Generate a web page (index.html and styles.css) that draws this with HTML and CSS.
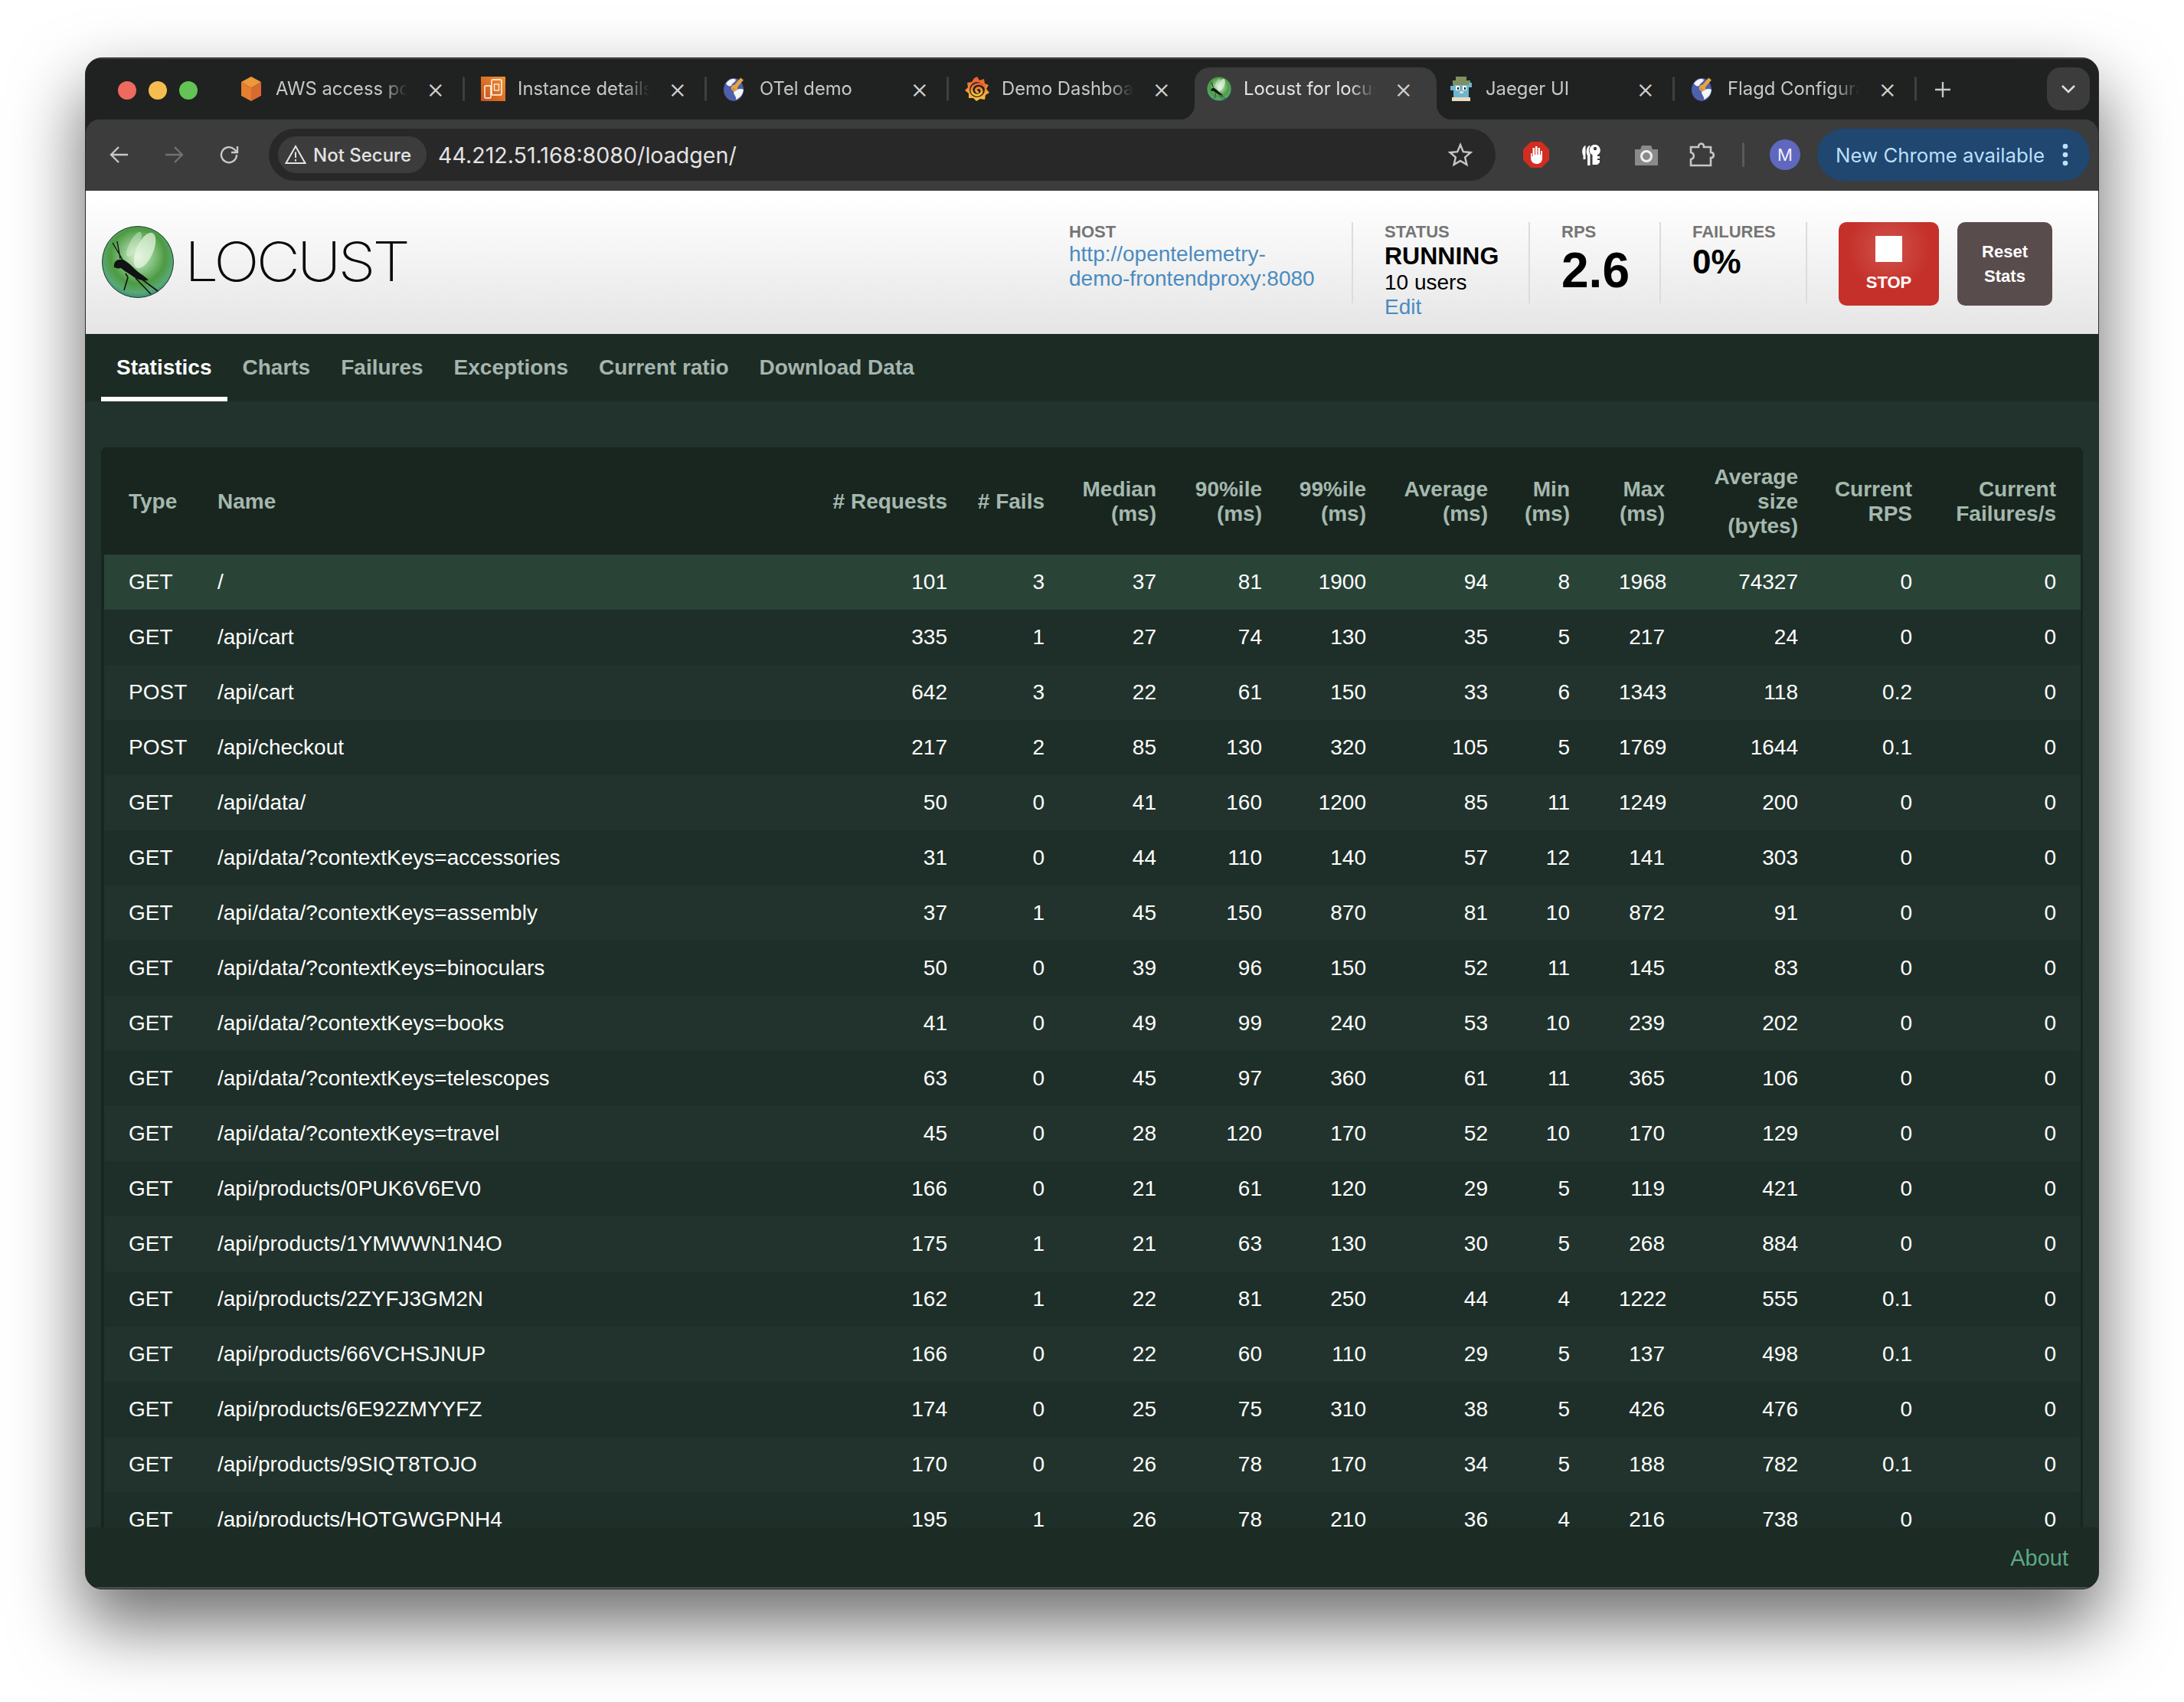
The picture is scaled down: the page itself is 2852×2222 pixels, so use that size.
FILE: index.html
```html
<!DOCTYPE html>
<html lang="en">
<head>
<meta charset="utf-8">
<title>Locust for locust</title>
<link rel="stylesheet" href="styles.css">
</head>
<body>
<svg class="defs" width="0" height="0" aria-hidden="true">
  <defs>
    <radialGradient id="orb" cx="50%" cy="42%" r="62%">
      <stop offset="0" stop-color="#d9f0d2"/><stop offset=".35" stop-color="#86c383"/><stop offset=".62" stop-color="#4d9a42"/><stop offset=".82" stop-color="#5aa874"/><stop offset="1" stop-color="#2f7f86"/>
    </radialGradient>
    <linearGradient id="graf" x1="0" y1="0" x2="0" y2="1">
      <stop offset="0" stop-color="#e8582e"/><stop offset="1" stop-color="#fbc63a"/>
    </linearGradient>
    <linearGradient id="ec2" x1="0" y1="1" x2="1" y2="0">
      <stop offset="0" stop-color="#c8511b"/><stop offset="1" stop-color="#f09030"/>
    </linearGradient>
    <symbol id="locust" viewBox="0 0 94 94">
      <circle cx="47" cy="47" r="46.5" fill="url(#orb)" stroke="#1d3b2a" stroke-width="1"/>
      <ellipse cx="56" cy="32" rx="11" ry="25" transform="rotate(24 56 32)" fill="#e9f6e4" opacity=".7"/>
      <ellipse cx="42" cy="24" rx="6" ry="18" transform="rotate(28 42 24)" fill="#e9f6e4" opacity=".4"/>
      <path d="M14 22 L27 44 M20 20 L24 43" stroke="#111" stroke-width="1.4" fill="none"/>
      <path d="M16 54 C15 46 20 43 28 44 C36 48 42 56 50 62 C54 65 58 67 61 71 C52 72 46 70 38 64 C32 60 28 58 25 55 C21 56 19 55 16 54Z" fill="#0f1412"/>
      <path d="M31 62 L34 67 L29 84 M44 68 L64 89 M50 68 L73 85" stroke="#111" stroke-width="1.6" fill="none"/>
    </symbol>
    <symbol id="otel" viewBox="0 0 32 32">
      <ellipse cx="14" cy="17" rx="13" ry="15" fill="#4e60ac"/>
      <path d="M4 9 C8 3 14 2 17 4 C16 8 12 8 11 12 C8 13 6 12 4 9Z M14 20 C18 16 24 15 27 17 C26 24 22 28 17 30 C18 26 14 24 14 20Z" fill="#f4f5f7"/>
      <path d="M14 16 L25 3" stroke="#e8a33a" stroke-width="5" fill="none"/>
      <circle cx="15" cy="15" r="3.2" fill="none" stroke="#e8a33a" stroke-width="2"/>
    </symbol>
  </defs>
</svg>

<div class="window">
  <div class="titlebar">
    <div class="traffic"><span class="light red"></span><span class="light amber"></span><span class="light green"></span></div>
    <div class="tabs">
      <div class="tab">
        <svg class="fav" viewBox="0 0 32 32"><polygon points="16,0 29,7 16,15 3,7" fill="#ef973b"/><polygon points="3,7 16,15 16,32 3,25" fill="#e57f31"/><polygon points="29,7 16,15 16,32 29,25" fill="#d96a2f"/></svg>
        <span class="tab-title">AWS access portal</span><span class="tab-x">×</span>
      </div>
      <div class="tab">
        <svg class="fav" viewBox="0 0 32 32"><rect width="32" height="32" fill="url(#ec2)"/><rect x="14" y="4" width="13" height="20" rx="1.5" fill="none" stroke="#fff" stroke-width="1.4"/><rect x="5" y="12" width="8" height="16" rx="1.5" fill="none" stroke="#fff" stroke-width="1.4"/><rect x="17.500" y="10" width="6" height="8" fill="none" stroke="#fff" stroke-width="1.2"/></svg>
        <span class="tab-title">Instance details</span><span class="tab-x">×</span>
      </div>
      <div class="tab">
        <svg class="fav"><use href="#otel"/></svg>
        <span class="tab-title">OTel demo</span><span class="tab-x">×</span>
      </div>
      <div class="tab tab-before-active">
        <svg class="fav" viewBox="0 0 32 32"><path d="M16 0 L19 5 L25 3 L26 9 L31 11 L28 16 L32 21 L27 24 L26 30 L20 29 L15 32 L11 28 L5 28 L5 22 L0 18 L4 14 L3 8 L9 7 L12 2Z" fill="url(#graf)"/><circle cx="16" cy="17" r="10" fill="#202221"/><path d="M26 13 C22 8 11 8 9 16 C8 23 16 27 21 22 C24 18 20 13 16 15 C13 17 15 21 18 20" fill="none" stroke="url(#graf)" stroke-width="3"/></svg>
        <span class="tab-title">Demo Dashboard</span><span class="tab-x">×</span>
      </div>
      <div class="tab tab-active">
        <svg class="fav"><use href="#locust"/></svg>
        <span class="tab-title">Locust for locust</span><span class="tab-x">×</span>
      </div>
      <div class="tab">
        <svg class="fav" viewBox="0 0 32 32" shape-rendering="crispEdges"><rect x="9" y="0" width="14" height="5" fill="#7f8f60"/><rect x="5" y="5" width="23" height="6" fill="#7f8f60"/><rect x="6" y="11" width="20" height="16" fill="#6bb6d0"/><rect x="2" y="12" width="4" height="6" fill="#6bb6d0"/><rect x="26" y="8" width="4" height="6" fill="#6bb6d0"/><rect x="9" y="12" width="5" height="6" fill="#fff"/><rect x="18" y="12" width="5" height="6" fill="#fff"/><rect x="11" y="14" width="2" height="3" fill="#222"/><rect x="20" y="14" width="2" height="3" fill="#222"/><rect x="14" y="19" width="5" height="3" fill="#e8d8b8"/><rect x="4" y="27" width="24" height="5" fill="#e8dcc0"/></svg>
        <span class="tab-title">Jaeger UI</span><span class="tab-x">×</span>
      </div>
      <div class="tab tab-last">
        <svg class="fav"><use href="#otel"/></svg>
        <span class="tab-title">Flagd Configurator</span><span class="tab-x">×</span>
      </div>
    </div>
    <svg class="plus" viewBox="0 0 22 22"><path d="M11 1V21M1 11H21" stroke="#c7c7c7" stroke-width="2.400"/></svg>
    <div class="tab-menu"><svg width="20" height="12" viewBox="0 0 20 12"><path d="M2 2L10 10L18 2" fill="none" stroke="#dcdcdc" stroke-width="2.600"/></svg></div>
  </div>

  <div class="toolbar">
    <svg class="nav-ico" viewBox="0 0 28 28"><path d="M25 14H4M13 4L3 14L13 24" fill="none" stroke="#c7c7c7" stroke-width="2.400"/></svg>
    <svg class="nav-ico nav-fwd" viewBox="0 0 28 28"><path d="M3 14H24M15 4L25 14L15 24" fill="none" stroke="#717171" stroke-width="2.400"/></svg>
    <svg class="nav-ico nav-reload" viewBox="0 0 28 28"><path d="M23 14A10 10 0 1 1 20 7L24 11M24 3V11H16" fill="none" stroke="#c7c7c7" stroke-width="2.400"/></svg>
    <div class="omnibox">
      <div class="secure">
        <svg width="28" height="26" viewBox="0 0 28 26"><path d="M14 2L26.500 24H1.500Z M14 9.500V17 M14 19V21.500" fill="none" stroke="#e3e3e3" stroke-width="2"/></svg>
        <span>Not Secure</span>
      </div>
      <span class="url">44.212.51.168:8080/loadgen/</span>
      <svg class="star" viewBox="0 0 32 32"><path d="M16 3L19.800 12.200L29.500 13L22.100 19.400L24.400 29L16 23.900L7.600 29L9.900 19.400L2.500 13L12.200 12.200Z" fill="none" stroke="#c7c7c7" stroke-width="2.400"/></svg>
    </div>
    <div class="exts">
      <svg class="ext" viewBox="0 0 34 34"><polygon points="10,0 24,0 34,10 34,24 24,34 10,34 0,24 0,10" fill="#d12d20"/><path d="M10 15V21C10 26 13 29 18 29C23 29 25 25 25 22V12H23V17H22V8H19.500V17H18.500V6H16V17H15V8H12.500V19H11.500V15Z" fill="#fff"/></svg>
      <svg class="ext" viewBox="0 0 34 34"><path d="M9 5C5 7 4 14 6.500 18V23H9.500V5Z" fill="#fff"/><path d="M14.500 5C10.500 7 9.500 14 12 18V31H15.500V5Z" fill="#fff"/><circle cx="21.700" cy="11" r="8" fill="#3c3c3c"/><circle cx="21.700" cy="11" r="7.200" fill="#fff"/><path d="M18.500 15H25V19H28V22H25V24H28V27L25 30H18.500Z" fill="#fff"/><circle cx="22" cy="9" r="2.200" fill="#3c3c3c"/></svg>
      <svg class="ext" viewBox="0 0 34 34"><path d="M2 10H9L11 5H23L25 10H32V31H2Z" fill="#8a8a8a"/><circle cx="17" cy="19" r="6.500" fill="none" stroke="#f0f0f0" stroke-width="3"/></svg>
      <svg class="ext" viewBox="0 0 34 34"><path d="M3 7H13C13 1 20 1 20 7H29V14C34 14 34 21 29 21V31H3V23C8 22 8 15 3 14Z" fill="none" stroke="#c7c7c7" stroke-width="2.600"/></svg>
    </div>
    <span class="tool-sep"></span>
    <span class="avatar">M</span>
    <div class="update">
      <span>New Chrome available</span>
      <svg width="10" height="30" viewBox="0 0 10 30"><circle cx="5" cy="4" r="3.300" fill="#c0e0fb"/><circle cx="5" cy="15" r="3.300" fill="#c0e0fb"/><circle cx="5" cy="26" r="3.300" fill="#c0e0fb"/></svg>
    </div>
  </div>

  <header class="app-header">
    <svg class="logo-orb"><use href="#locust"/></svg>
    <span class="wordmark">LOCUST</span>
    <div class="stats">
      <div class="stat stat-host"><div class="stat-label">HOST</div><a class="stat-link">http://opentelemetry-<br>demo-frontendproxy:8080</a></div>
      <div class="stat stat-status"><div class="stat-label">STATUS</div><div class="running">RUNNING</div><div class="users">10 users</div><a class="stat-link stat-edit">Edit</a></div>
      <div class="stat stat-rps"><div class="stat-label">RPS</div><div class="rps">2.6</div></div>
      <div class="stat stat-fail"><div class="stat-label">FAILURES</div><div class="fail">0%</div></div>
      <div class="btn btn-stop"><span class="stop-ico"></span><span>STOP</span></div>
      <div class="btn btn-reset"><span>Reset</span><span>Stats</span></div>
    </div>
  </header>

  <nav class="app-nav">
    <span class="nav-tab nav-tab-on">Statistics</span>
    <span class="nav-tab">Charts</span>
    <span class="nav-tab">Failures</span>
    <span class="nav-tab">Exceptions</span>
    <span class="nav-tab">Current ratio</span>
    <span class="nav-tab">Download Data</span>
  </nav>

  <main class="app-main">
    <div class="panel">
      <table class="stats-table">
        <colgroup>
          <col class="c-type"><col class="c-name"><col class="c-req"><col class="c-fails"><col class="c-med"><col class="c-p90"><col class="c-p99"><col class="c-avg"><col class="c-min"><col class="c-max"><col class="c-size"><col class="c-rps"><col class="c-frate">
        </colgroup>
        <thead>
          <tr><th class="l">Type</th><th class="l">Name</th><th># Requests</th><th># Fails</th><th>Median<br>(ms)</th><th>90%ile<br>(ms)</th><th>99%ile<br>(ms)</th><th>Average<br>(ms)</th><th>Min<br>(ms)</th><th>Max<br>(ms)</th><th>Average<br>size<br>(bytes)</th><th>Current<br>RPS</th><th>Current<br>Failures/s</th></tr>
        </thead>
        <tbody>
          <tr class="hover"><td class="l">GET</td><td class="l">/</td><td>101</td><td>3</td><td>37</td><td>81</td><td>1900</td><td>94</td><td>8</td><td>1968</td><td>74327</td><td>0</td><td>0</td></tr>
          <tr><td class="l">GET</td><td class="l">/api/cart</td><td>335</td><td>1</td><td>27</td><td>74</td><td>130</td><td>35</td><td>5</td><td>217</td><td>24</td><td>0</td><td>0</td></tr>
          <tr><td class="l">POST</td><td class="l">/api/cart</td><td>642</td><td>3</td><td>22</td><td>61</td><td>150</td><td>33</td><td>6</td><td>1343</td><td>118</td><td>0.2</td><td>0</td></tr>
          <tr><td class="l">POST</td><td class="l">/api/checkout</td><td>217</td><td>2</td><td>85</td><td>130</td><td>320</td><td>105</td><td>5</td><td>1769</td><td>1644</td><td>0.1</td><td>0</td></tr>
          <tr><td class="l">GET</td><td class="l">/api/data/</td><td>50</td><td>0</td><td>41</td><td>160</td><td>1200</td><td>85</td><td>11</td><td>1249</td><td>200</td><td>0</td><td>0</td></tr>
          <tr><td class="l">GET</td><td class="l">/api/data/?contextKeys=accessories</td><td>31</td><td>0</td><td>44</td><td>110</td><td>140</td><td>57</td><td>12</td><td>141</td><td>303</td><td>0</td><td>0</td></tr>
          <tr><td class="l">GET</td><td class="l">/api/data/?contextKeys=assembly</td><td>37</td><td>1</td><td>45</td><td>150</td><td>870</td><td>81</td><td>10</td><td>872</td><td>91</td><td>0</td><td>0</td></tr>
          <tr><td class="l">GET</td><td class="l">/api/data/?contextKeys=binoculars</td><td>50</td><td>0</td><td>39</td><td>96</td><td>150</td><td>52</td><td>11</td><td>145</td><td>83</td><td>0</td><td>0</td></tr>
          <tr><td class="l">GET</td><td class="l">/api/data/?contextKeys=books</td><td>41</td><td>0</td><td>49</td><td>99</td><td>240</td><td>53</td><td>10</td><td>239</td><td>202</td><td>0</td><td>0</td></tr>
          <tr><td class="l">GET</td><td class="l">/api/data/?contextKeys=telescopes</td><td>63</td><td>0</td><td>45</td><td>97</td><td>360</td><td>61</td><td>11</td><td>365</td><td>106</td><td>0</td><td>0</td></tr>
          <tr><td class="l">GET</td><td class="l">/api/data/?contextKeys=travel</td><td>45</td><td>0</td><td>28</td><td>120</td><td>170</td><td>52</td><td>10</td><td>170</td><td>129</td><td>0</td><td>0</td></tr>
          <tr><td class="l">GET</td><td class="l">/api/products/0PUK6V6EV0</td><td>166</td><td>0</td><td>21</td><td>61</td><td>120</td><td>29</td><td>5</td><td>119</td><td>421</td><td>0</td><td>0</td></tr>
          <tr><td class="l">GET</td><td class="l">/api/products/1YMWWN1N4O</td><td>175</td><td>1</td><td>21</td><td>63</td><td>130</td><td>30</td><td>5</td><td>268</td><td>884</td><td>0</td><td>0</td></tr>
          <tr><td class="l">GET</td><td class="l">/api/products/2ZYFJ3GM2N</td><td>162</td><td>1</td><td>22</td><td>81</td><td>250</td><td>44</td><td>4</td><td>1222</td><td>555</td><td>0.1</td><td>0</td></tr>
          <tr><td class="l">GET</td><td class="l">/api/products/66VCHSJNUP</td><td>166</td><td>0</td><td>22</td><td>60</td><td>110</td><td>29</td><td>5</td><td>137</td><td>498</td><td>0.1</td><td>0</td></tr>
          <tr><td class="l">GET</td><td class="l">/api/products/6E92ZMYYFZ</td><td>174</td><td>0</td><td>25</td><td>75</td><td>310</td><td>38</td><td>5</td><td>426</td><td>476</td><td>0</td><td>0</td></tr>
          <tr><td class="l">GET</td><td class="l">/api/products/9SIQT8TOJO</td><td>170</td><td>0</td><td>26</td><td>78</td><td>170</td><td>34</td><td>5</td><td>188</td><td>782</td><td>0.1</td><td>0</td></tr>
          <tr><td class="l">GET</td><td class="l">/api/products/HQTGWGPNH4</td><td>195</td><td>1</td><td>26</td><td>78</td><td>210</td><td>36</td><td>4</td><td>216</td><td>738</td><td>0</td><td>0</td></tr>
        </tbody>
      </table>
    </div>
  </main>

  <footer class="app-footer"><a class="about">About</a></footer>
</div>
</body>
</html>
```

FILE: styles.css
```css
* { box-sizing: border-box; }
html, body { margin: 0; height: 100%; }
body {
  width: 2852px;
  height: 2222px;
  padding: 75px 111px 147px 111px;
  background: #fff;
  overflow: hidden;
  font-family: "Liberation Sans", Arial, sans-serif;
}
.defs { display: block; height: 0; width: 0; position: absolute; }

.window {
  width: 2630px;
  height: 2000px;
  border: 1px solid #2a2a2a;
  border-radius: 22px;
  overflow: hidden;
  display: flex;
  flex-direction: column;
  background: #202221;
  box-shadow: 0 44px 90px 4px rgba(0, 0, 0, .56);
}

/* ---------- browser chrome ---------- */
.titlebar {
  height: 80px;
  flex: none;
  display: flex;
  align-items: flex-start;
  background: #202221;
  border-top: 1px solid #4a4a4a;
  font-family: Inter, "Liberation Sans", sans-serif;
}
.traffic { width: 184px; height: 79px; flex: none; display: flex; gap: 16px; padding: 29px 0 0 42px; }
.light { width: 24px; height: 24px; border-radius: 50%; }
.red { background: #ee6a5f; }
.amber { background: #f5bd4f; }
.green { background: #61c454; }

.tabs { display: flex; height: 79px; flex: none; padding-top: 11px; }
.tab {
  width: 316px;
  height: 68px;
  flex: none;
  display: flex;
  align-items: flex-start;
  padding: 12px 0 0 16px;
  position: relative;
  color: #c7c7c7;
  font-size: 23.800px;
}
.tab::after {
  content: "";
  position: absolute;
  right: 5px;
  top: 12px;
  width: 3px;
  height: 32px;
  background: #3f3f3f;
  border-radius: 2px;
}
.tab-active, .tab-before-active::after { background: none; }
.tab-active { background: #3c3c3c; border-radius: 20px 20px 0 0; color: #e3e3e3; }
.tab-active::after, .tab-active::before {
  content: "";
  position: absolute;
  top: auto;
  bottom: 0;
  width: 20px;
  height: 20px;
  border-radius: 0;
}
.tab-active::after { right: -20px; background: radial-gradient(circle at 100% 0, transparent 20px, #3c3c3c 20.500px); }
.tab-active::before { left: -20px; background: radial-gradient(circle at 0 0, transparent 20px, #3c3c3c 20.500px); }
.fav { width: 32px; height: 32px; flex: none; }
.tab-title {
  width: 180px;
  margin-left: 16px;
  white-space: nowrap;
  overflow: hidden;
  line-height: 32px;
  -webkit-mask-image: linear-gradient(90deg, #000 138px, transparent 172px);
  mask-image: linear-gradient(90deg, #000 138px, transparent 172px);
}
.tab-x { margin-left: 17px; width: 22px; text-align: center; font-size: 36px; line-height: 30px; font-weight: 300; color: #d0d0d0; }
.plus { width: 22px; height: 22px; margin: 29px 0 0 18px; flex: none; }
.tab-menu {
  width: 56px;
  height: 56px;
  flex: none;
  margin: 11px 0 0 125px;
  background: #3c3c3c;
  border-radius: 18px;
  display: flex;
  align-items: center;
  justify-content: center;
}

.toolbar {
  height: 93px;
  flex: none;
  display: flex;
  align-items: flex-start;
  background: #3c3c3c;
  border-radius: 18px 18px 0 0;
  padding-top: 12px;
  font-family: Inter, "Liberation Sans", sans-serif;
}
.nav-ico { width: 28px; height: 28px; flex: none; margin: 20px 0 0 30px; }
.nav-fwd { margin-left: 43px; }
.nav-reload { margin-left: 45px; }
.omnibox {
  width: 1602px;
  height: 68px;
  flex: none;
  margin-left: 37px;
  background: #282828;
  border-radius: 34px;
  display: flex;
  align-items: center;
  padding-left: 12px;
}
.secure {
  height: 48px;
  width: 194px;
  flex: none;
  display: flex;
  align-items: center;
  gap: 9px;
  padding-left: 9px;
  background: #3c3c3c;
  border-radius: 24px;
  color: #e3e3e3;
  font-size: 24px;
  font-weight: 500;
  white-space: nowrap;
}
.url { margin-left: 15px; color: #e3e3e3; font-size: 28.600px; white-space: nowrap; }
.star { width: 32px; height: 32px; margin-left: auto; margin-right: 30px; flex: none; }
.exts { display: flex; gap: 38px; margin: 17px 0 0 36px; flex: none; }
.ext { width: 34px; height: 34px; flex: none; }
.tool-sep { width: 3px; height: 32px; margin: 18px 0 0 36px; background: #5a5a5a; border-radius: 2px; flex: none; }
.avatar {
  width: 40px;
  height: 40px;
  flex: none;
  margin: 14px 0 0 33px;
  border-radius: 50%;
  background: #5f68be;
  color: #eef;
  font-size: 22px;
  text-align: center;
  line-height: 40px;
}
.update {
  width: 356px;
  height: 68px;
  flex: none;
  margin-left: 22px;
  border-radius: 34px;
  background: #1f4770;
  color: #bcdffb;
  font-size: 25.800px;
  display: flex;
  align-items: center;
  justify-content: space-between;
  padding: 0 27px 0 24px;
  white-space: nowrap;
}

/* ---------- app header ---------- */
.app-header {
  height: 187px;
  flex: none;
  display: flex;
  align-items: flex-start;
  background: linear-gradient(180deg, #fff 0%, #fff 5%, #e5e5e5 100%);
  padding: 46px 60px 0 21px;
  color: #000;
}
.logo-orb { width: 94px; height: 94px; flex: none; }
.wordmark {
  margin: -1px 0 0 14px;
  font-family: Inter, "Liberation Sans", sans-serif;
  font-size: 71px;
  line-height: 94px;
  font-weight: 200;
  letter-spacing: -3.500px;
  color: #0a0a0a;
  transform: scaleX(1.11);
  transform-origin: left center;
}
.stats { margin: -5px 0 0 auto; display: flex; align-items: flex-start; }
.stat { height: 106px; border-right: 2px solid #dcdcdc; margin-right: 41px; }
.stat-host { width: 371px; }
.stat-status { width: 190px; }
.stat-rps { width: 130px; }
.stat-fail { width: 150px; }
.stat-label { font-size: 22px; font-weight: 700; line-height: 26px; color: #757575; }
.stat-link { display: block; font-size: 28px; line-height: 32px; color: #4b8bc0; }
.running { font-size: 32px; font-weight: 700; line-height: 36px; }
.users { font-size: 28px; line-height: 32px; margin-top: 1px; }
.stat-edit { line-height: 32px; }
.rps { font-size: 64px; font-weight: 700; line-height: 72px; margin-top: 1px; }
.fail { font-size: 44px; font-weight: 700; line-height: 50px; margin-top: 1px; }
.btn {
  height: 109px;
  flex: none;
  border-radius: 10px;
  display: flex;
  flex-direction: column;
  align-items: center;
  color: #fff;
  font-size: 22px;
  font-weight: 700;
}
.btn-stop {
  width: 131px;
  margin-right: 24px;
  padding-top: 18px;
  gap: 14px;
  background: radial-gradient(circle at 50% 32%, #d0544d 0, #c5302a 55%);
}
.stop-ico { width: 35px; height: 34px; background: #fff; }
.btn-reset {
  width: 124px;
  padding-top: 26px;
  gap: 6px;
  line-height: 26px;
  background: #594c4c;
}

/* ---------- nav ---------- */
.app-nav {
  height: 88px;
  flex: none;
  display: flex;
  align-items: flex-start;
  padding-left: 20px;
  background: #1c2b24;
}
.nav-tab {
  height: 88px;
  padding: 27px 20px 0;
  font-size: 28px;
  line-height: 34px;
  font-weight: 700;
  color: #a5b5ad;
}
.nav-tab-on { color: #fff; border-bottom: 6px solid #fff; }

/* ---------- main ---------- */
.app-main {
  flex: 1;
  min-height: 0;
  overflow: hidden;
  background: #21332c;
  padding: 60px 20px 0;
}
.panel {
  height: 1500px;
  padding: 0 4px;
  background: #18261f;
  border-radius: 8px;
}
.stats-table {
  table-layout: fixed;
  width: 2581px;
  border-collapse: collapse;
  font-size: 28px;
  color: #fff;
}
.c-type { width: 116px; }
.c-name { width: 803px; }
.c-req { width: 214px; }
.c-fails { width: 127px; }
.c-med { width: 146px; }
.c-p90 { width: 138px; }
.c-p99 { width: 136px; }
.c-avg { width: 159px; }
.c-min { width: 107px; }
.c-max { width: 124px; }
.c-size { width: 174px; }
.c-rps { width: 149px; }
.c-frate { width: 188px; }
.stats-table th, .stats-table td { padding: 0 32px; text-align: right; white-space: nowrap; }
.stats-table .l { text-align: left; }
.stats-table th { height: 140px; line-height: 32px; font-weight: 700; color: #a5b8ae; padding-left: 0; padding-top: 2px; }
.stats-table th.l { padding-left: 32px; }
.stats-table td { height: 72px; line-height: 32px; }
tbody tr:nth-child(odd) { background: #21332c; }
tbody tr:nth-child(even) { background: #1e2e28; }
tbody tr.hover { background: #294337; }

/* ---------- footer ---------- */
.app-footer {
  height: 80px;
  flex: none;
  display: flex;
  justify-content: flex-end;
  align-items: flex-start;
  padding: 23px 39px 0 0;
  background: #1c2b24;
  border-bottom: 2px solid #46544e;
}
.about { font-size: 29px; line-height: 34px; color: #5da888; }
```
